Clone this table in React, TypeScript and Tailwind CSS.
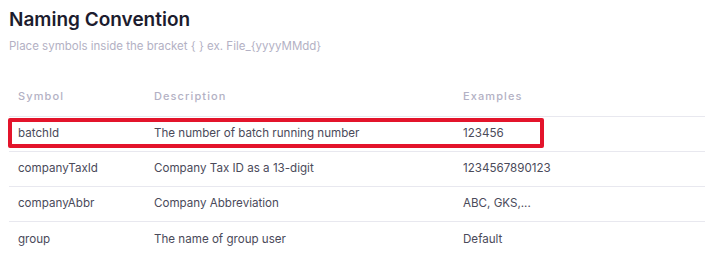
import React from "react";

const rows = [
  { s: "batchId", d: "The number of batch running number", e: "123456" },
  { s: "companyTaxId", d: "Company Tax ID as a 13-digit", e: "1234567890123" },
  { s: "companyAbbr", d: "Company Abbreviation", e: "ABC, GKS,..." },
  { s: "group", d: "The name of group user", e: "Default" },
];

export default function App() {
  return (
    <div
      className="w-[714px] h-[277px] bg-white overflow-hidden"
      style={{ fontFamily: "Inter, 'Open Sans', sans-serif" }}
    >
      <div className="pl-[9px] pr-[9px] pt-[8px]">
        <h1 className="text-[19px] leading-[24px] font-semibold text-[#1c1c2e]">Naming Convention</h1>
        <p className="mt-[6px] text-[11.5px] leading-[16px] text-[#b3b1c4]">
          Place symbols inside the bracket {"{ }"} ex. File_{"{yyyyMMdd}"}
        </p>
        <div className="mt-[25px] relative">
          <div className="flex h-[38px] items-center pb-[2px] border-b border-[#e8e8ef] text-[11px] font-medium tracking-[1.1px] text-[#b3b1c4]">
            <div className="w-[145px] pl-[9px]">Symbol</div>
            <div className="w-[309px]">Description</div>
            <div>Examples</div>
          </div>
          {rows.map((r, i) => (
            <div
              key={r.s}
              className={
                "flex h-[35px] items-center text-[11.6px] text-[#4a4a5a] " +
                (i < rows.length - 1 ? "border-b border-[#e8e8ef]" : "")
              }
            >
              <div className="w-[145px] pl-[9px]">{r.s}</div>
              <div className="w-[309px]">{r.d}</div>
              <div>{r.e}</div>
            </div>
          ))}
          <div className="absolute left-[-1px] top-[39px] w-[536px] h-[30px] border-[4px] border-[#e3142b] rounded-[2px] pointer-events-none" />
        </div>
      </div>
    </div>
  );
}
